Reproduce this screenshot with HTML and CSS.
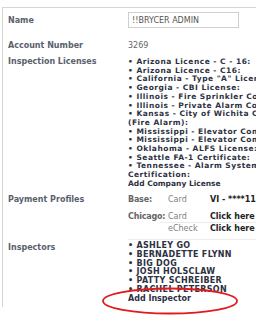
FILE: index.html
```html
<!DOCTYPE html>
<html lang="en">
<head>
    <meta charset="UTF-8">
    <title>Company Profile</title>
    <link rel="stylesheet" href="styles.css">
</head>
<body>
<section class="panel">
    <div class="row row-name">
        <div class="label">Name</div>
        <div class="value"><input type="text" value="!!BRYCER ADMIN"></div>
    </div>
    <div class="row row-account">
        <div class="label">Account Number</div>
        <div class="value plain">3269</div>
    </div>
    <div class="row row-licenses">
        <div class="label">Inspection Licenses</div>
        <div class="value list">
            <div class="item">&bull; Arizona Licence - C - 16:</div>
            <div class="item">&bull; Arizona Licence - C16:</div>
            <div class="item">&bull; California - Type "A" License:</div>
            <div class="item">&bull; Georgia - CBI License:</div>
            <div class="item">&bull; Illinois - Fire Sprinkler Contractor:</div>
            <div class="item">&bull; Illinois - Private Alarm Contractor:</div>
            <div class="item">&bull; Kansas - City of Wichita County<br>(Fire Alarm):</div>
            <div class="item">&bull; Mississippi - Elevator Company:</div>
            <div class="item">&bull; Mississippi - Elevator Company:</div>
            <div class="item">&bull; Oklahoma - ALFS License:</div>
            <div class="item">&bull; Seattle FA-1 Certificate:</div>
            <div class="item">&bull; Tennessee - Alarm Systems Contractor<br>Certification:</div>
            <div>Add Company License</div>
        </div>
    </div>
    <div class="row row-payment">
        <div class="label">Payment Profiles</div>
        <div class="value">
            <div class="pay pay-first">
                <span class="pay-site">Base:</span>
                <span class="pay-type">Card</span>
                <span class="pay-link">VI - ****1111</span>
            </div>
            <div class="pay pay-mid">
                <span class="pay-site">Chicago:</span>
                <span class="pay-type">Card</span>
                <span class="pay-link">Click here</span>
            </div>
            <div class="pay pay-last">
                <span class="pay-site"></span>
                <span class="pay-type">eCheck</span>
                <span class="pay-link">Click here</span>
            </div>
        </div>
    </div>
    <div class="row row-inspectors">
        <div class="label">Inspectors</div>
        <div class="value list">
            <div class="name">&bull; ASHLEY GO</div>
            <div class="name">&bull; BERNADETTE FLYNN</div>
            <div class="name">&bull; BIG DOG</div>
            <div class="name">&bull; JOSH HOLSCLAW</div>
            <div class="name">&bull; PATTY SCHREIBER</div>
            <div class="name">&bull; RACHEL PETERSON</div>
            <div class="add-inspector">Add Inspector
                <svg class="circle" width="140" height="30" viewBox="0 0 140 30">
                    <ellipse cx="70" cy="15" rx="67" ry="12.5" fill="none" stroke="#e3191c" stroke-width="1.8"/>
                </svg>
            </div>
        </div>
    </div>
</section>
</body>
</html>
```

FILE: styles.css
```css
* {
    margin: 0; padding: 0; box-sizing: border-box;
}

html, body {
    background: #fff;
    overflow: hidden;
}

body {
    width: 256px;
    height: 324px;
    font-family: "DejaVu Sans", Verdana, sans-serif;
    font-size: 8px;
}

.panel {
    margin: 7px 0 0 2px;
    width: 360px;
    height: 300px;
    border-top: 1px solid #d4d4d4;
    border-left: 1px solid #d4d4d4;
    padding-left: 5px;
}

.row {
    display: grid;
    grid-template-columns: 120px 220px;
}

.label {
    font-weight: bold;
    color: #5a616c;
    line-height: 10px;
}

.row-name {
    padding-top: 4px;
    height: 32px;
}

.row-name .label {
    padding-top: 4px;
}

.value input {
    width: 111px;
    height: 16px;
    border: 1px solid #cfcfcf;
    padding: 0 3px;
    font-family: "DejaVu Sans", Verdana, sans-serif;
    font-size: 8px;
    color: #555;
    outline: none;
}

.row-account {
    height: 16px;
    padding-top: 1px;
}

.plain {
    color: #666;
    line-height: 10px;
}

.row-licenses .label {
    padding-top: 1px;
}

.list {
    font-weight: bold;
    color: #2d3142;
    font-size: 7.5px;
    line-height: 8.7px;
    white-space: nowrap;
}

.row-licenses .list {
    padding-top: 2px;
}

.row-licenses .item {
    letter-spacing: 0.5px;
}

.row-payment {
    margin-top: 4px;
}

.row-payment .label {
    padding-top: 2px;
}

.pay {
    display: grid;
    grid-template-columns: 32px 50px 1fr;
    line-height: 10px;
}

.pay > span {
    padding: 2px 0;
}

.pay-site {
    color: #666;
    font-weight: bold;
    letter-spacing: -0.2px;
}

.pay-type {
    color: #808080;
    padding-left: 8px !important;
}

.pay-link {
    font-weight: bold;
    color: #222;
}

.pay-mid > span {
    padding: 5px 0 0;
}

.pay-mid .pay-type,
.pay-mid .pay-link {
    border-bottom: 1px solid #ececec;
}

.pay-last > span {
    padding: 1px 0 5px;
    border-bottom: 1px solid #ececec;
}

.row-inspectors .list {
    padding-top: 2.5px;
    font-size: 8px;
    line-height: 8.8px;
}

.row-inspectors .name {
    letter-spacing: 0.3px;
}

.row-inspectors .label {
    padding-top: 3px;
}

.add-inspector {
    position: relative;
}

.circle {
    position: absolute;
    left: -28px;
    top: -8.4px;
}
```
